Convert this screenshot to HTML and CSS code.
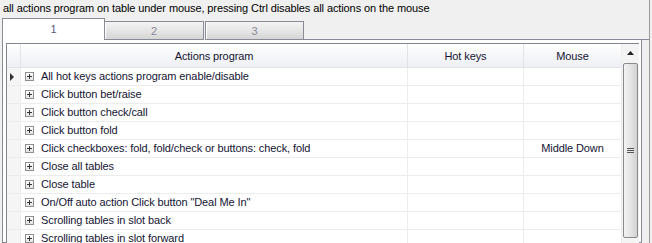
FILE: index.html
```html
<!DOCTYPE html>
<html>
<head>
<meta charset="utf-8">
<link rel="stylesheet" href="styles.css">
</head>
<body>
<div class="window">
  <div class="hint">all actions program on table under mouse, pressing Ctrl disables all actions on the mouse</div>
  <div class="tabs">
    <div class="tab active">1</div>
    <div class="tab">2</div>
    <div class="tab">3</div>
    <div class="tab-rest"></div>
  </div>
  <div class="panel">
    <div class="grid">
      <div class="table">
        <div class="row head">
          <div class="rh"></div>
          <div class="c c1">Actions program</div>
          <div class="c c2">Hot keys</div>
          <div class="c c3">Mouse</div>
        </div>
        <div class="row"><div class="rh"><span class="cur"></span></div><div class="c c1"><span class="pl"></span>All hot keys actions program enable/disable</div><div class="c c2"></div><div class="c c3"></div></div>
        <div class="row"><div class="rh"></div><div class="c c1"><span class="pl"></span>Click button bet/raise</div><div class="c c2"></div><div class="c c3"></div></div>
        <div class="row"><div class="rh"></div><div class="c c1"><span class="pl"></span>Click button check/call</div><div class="c c2"></div><div class="c c3"></div></div>
        <div class="row"><div class="rh"></div><div class="c c1"><span class="pl"></span>Click button fold</div><div class="c c2"></div><div class="c c3"></div></div>
        <div class="row"><div class="rh"></div><div class="c c1"><span class="pl"></span>Click checkboxes: fold, fold/check or buttons: check, fold</div><div class="c c2"></div><div class="c c3 center">Middle Down</div></div>
        <div class="row"><div class="rh"></div><div class="c c1"><span class="pl"></span>Close all tables</div><div class="c c2"></div><div class="c c3"></div></div>
        <div class="row"><div class="rh"></div><div class="c c1"><span class="pl"></span>Close table</div><div class="c c2"></div><div class="c c3"></div></div>
        <div class="row"><div class="rh"></div><div class="c c1"><span class="pl"></span>On/Off auto action Click button "Deal Me In"</div><div class="c c2"></div><div class="c c3"></div></div>
        <div class="row"><div class="rh"></div><div class="c c1"><span class="pl"></span>Scrolling tables in slot back</div><div class="c c2"></div><div class="c c3"></div></div>
        <div class="row"><div class="rh"></div><div class="c c1"><span class="pl"></span>Scrolling tables in slot forward</div><div class="c c2"></div><div class="c c3"></div></div>
      </div>
      <div class="scroll">
        <div class="sb-up"><svg width="7" height="4" viewBox="0 0 7 4"><path d="M0 4 L3.5 0 L7 4 Z" fill="#222"/></svg></div>
        <div class="thumb"><span class="grip"></span></div>
      </div>
    </div>
  </div>
</div>
</body>
</html>
```
FILE: styles.css
```css
html, body {
  margin: 0;
  padding: 0;
  width: 652px;
  height: 243px;
  overflow: hidden;
  background: #f0f0f0;
}
.window {
  font-family: "Liberation Sans", Arial, sans-serif;
  font-size: 11px;
  letter-spacing: -0.1px;
  color: #000;
  width: 650px;
  height: 243px;
  overflow: hidden;
  border-right: 1px solid #9a9a9a;
  box-sizing: border-box;
  display: flex;
  flex-direction: column;
}
.hint {
  flex: none;
  height: 18px;
  line-height: 16px;
  padding-left: 3px;
  color: #000;
}
.tabs {
  flex: none;
  display: flex;
  align-items: flex-end;
  height: 22px;
  padding-left: 2px;
}
.tab {
  width: 99px;
  height: 19px;
  box-sizing: border-box;
  border: 1px solid #898c95;
  border-left: none;
  background: linear-gradient(#f3f3f3, #e6e6e6 50%, #d5d5d5);
  text-align: center;
  line-height: 18px;
  color: #8a8a98;
  box-shadow: inset 1px 0 0 #fff;
}
.tab + .tab + .tab {
  margin-left: 1px;
  border-left: 1px solid #898c95;
}
.tab.active {
  width: 103px;
  height: 22px;
  background: #fff;
  border-left: 1px solid #898c95;
  border-bottom: none;
  line-height: 20px;
  color: #5a5a80;
  box-shadow: none;
}
.tab-rest {
  flex: 1;
  border-bottom: 1px solid #898c95;
  height: 0;
}
.panel {
  flex: none;
  margin-left: 2px;
  width: 640px;
  height: 203px;
  box-sizing: border-box;
  border: 1px solid #898c95;
  border-top: none;
  background: #fff;
  padding: 3px 2px 0 3px;
}
.grid {
  display: flex;
  border: 1px solid #828790;
  border-bottom: none;
  height: 200px;
  background: #fff;
}
.table {
  width: 614px;
}
.row {
  display: grid;
  grid-template-columns: 14px 387px 116px 97px;
  height: 18px;
}
.row > div {
  border-bottom: 1px solid #ececec;
  border-right: 1px solid #ececec;
  box-sizing: border-box;
  overflow: hidden;
  white-space: nowrap;
}
.row > .c3 { border-right: none; }
.rh {
  background: #f5f5f5;
  position: relative;
}
.c {
  line-height: 17px;
  color: #141432;
}
.c1 {
  display: flex;
  align-items: center;
  padding-left: 4px;
}
.center { text-align: center; }
.head {
  height: 24px;
}
.head > div {
  background: linear-gradient(#ffffff, #f5f6f8 55%, #eef0f4);
  border-bottom: 1px solid #e2e3e6;
  border-right: 1px solid #e2e3e6;
}
.head .c {
  line-height: 25px;
  text-align: center;
  display: block;
  padding: 0;
}
.pl {
  width: 9px;
  height: 9px;
  box-sizing: border-box;
  border: 1px solid #8f8f8f;
  background: linear-gradient(#ffffff, #e4e4e4);
  margin-right: 7px;
  position: relative;
  flex: none;
}
.pl::before, .pl::after {
  content: "";
  position: absolute;
  background: #333;
}
.pl::before { left: 1px; top: 3px; width: 5px; height: 1px; }
.pl::after { left: 3px; top: 1px; width: 1px; height: 5px; }
.cur {
  position: absolute;
  left: 3px;
  top: 5px;
  width: 0;
  height: 0;
  border-top: 4px solid transparent;
  border-bottom: 4px solid transparent;
  border-left: 4px solid #333;
}
.scroll {
  width: 17px;
  display: flex;
  flex-direction: column;
  align-items: center;
  background: #f4f4f4;
  border-left: 1px solid #ececec;
}
.sb-up {
  flex: none;
  height: 18px;
  width: 17px;
  display: flex;
  align-items: center;
  justify-content: center;
}
.thumb {
  flex: none;
  margin-top: 1px;
  width: 15px;
  height: 175px;
  box-sizing: border-box;
  border: 1px solid #8a8a8a;
  border-radius: 2px;
  background: linear-gradient(90deg, #f3f3f3, #e6e6e6 45%, #d2d2d2);
  display: flex;
  align-items: center;
  justify-content: center;
}
.grip {
  width: 7px;
  height: 5px;
  border-top: 1px solid #555;
  border-bottom: 1px solid #555;
  box-sizing: border-box;
  position: relative;
}
.grip::after {
  content: "";
  position: absolute;
  left: 0;
  right: 0;
  top: 1px;
  border-top: 1px solid #555;
}
```
